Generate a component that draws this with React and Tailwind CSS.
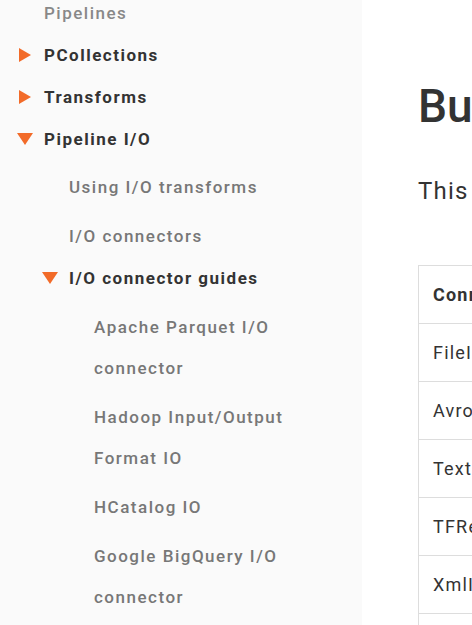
import React from 'react'

const ORANGE = '#f26b29'

// ── Triangles for expandable nav items ──────────────────────────────
const Caret = ({ open }) =>
  open ? (
    <svg width="16" height="12" viewBox="0 0 16 12" className="shrink-0">
      <polygon points="0,0 16,0 8,12" fill={ORANGE} />
    </svg>
  ) : (
    <svg width="12" height="14" viewBox="0 0 12 14" className="shrink-0">
      <polygon points="0,0 12,7 0,14" fill={ORANGE} />
    </svg>
  )

const Leaf = ({ children, indent }) => (
  <li className={`${indent} py-[4px] leading-[41px] text-[#777] font-medium`}>{children}</li>
)

const Branch = ({ label, open, indent, leading = 'leading-[42px]' }) => (
  <div className={`flex items-center ${indent} ${leading} font-bold text-[#333]`}>
    <span className={`flex ${open ? 'w-[27px]' : 'w-[25px]'}`}>
      <Caret open={open} />
    </span>
    {label}
  </div>
)

const Sidebar = () => (
  <aside className="w-[362px] shrink-0 bg-[#fafafa] h-[625px] overflow-hidden">
    <ul className="-mt-[8px] text-[17px] tracking-[1.5px]">
      <li className="pl-[44px] leading-[42px] font-medium text-[#888]">Pipelines</li>
      <li><Branch label="PCollections" indent="pl-[19px]" /></li>
      <li><Branch label="Transforms" indent="pl-[19px]" /></li>
      <li>
        <Branch label="Pipeline I/O" open indent="pl-[17px]" />
        <ul className="mt-[3px]">
          <Leaf indent="pl-[69px]">Using I/O transforms</Leaf>
          <Leaf indent="pl-[69px]">I/O connectors</Leaf>
          <li>
            <Branch label="I/O connector guides" open indent="pl-[42px]" leading="leading-[34px]" />
            <ul className="mt-[8px] pr-[60px]">
              <Leaf indent="pl-[94px]">Apache Parquet I/O connector</Leaf>
              <Leaf indent="pl-[94px]">Hadoop Input/Output Format IO</Leaf>
              <Leaf indent="pl-[94px]">HCatalog IO</Leaf>
              <Leaf indent="pl-[94px]">Google BigQuery I/O connector</Leaf>
              <Leaf indent="pl-[94px]">Google Cloud Spanner I/O connector</Leaf>
            </ul>
          </li>
        </ul>
      </li>
    </ul>
  </aside>
)

const ROWS = ['FileIO', 'AvroIO', 'TextIO', 'TFRecordIO', 'XmlIO', 'TikaIO', 'ParquetIO']

const Main = () => (
  <main className="w-[900px] shrink-0 bg-white pl-[56px] text-[#333]">
    <h1 className="mt-[79px] text-[46px] leading-[55px] font-medium whitespace-nowrap">
      Built-in I/O Transforms
    </h1>
    <p className="mt-[39px] text-[24px] leading-[36px] tracking-[1.2px] whitespace-nowrap">
      This table contains I/O transforms that are currently planned or in-progress.
    </p>
    <table className="mt-[56px] border-collapse text-[18px] tracking-[1.2px]">
      <thead>
        <tr className="h-[58px]">
          <th className="border border-[#ddd] px-[14px] text-left font-bold">Connector</th>
          <th className="border border-[#ddd] px-[14px] text-left font-bold">Description</th>
          <th className="border border-[#ddd] px-[14px] text-left font-bold">Java</th>
        </tr>
      </thead>
      <tbody>
        {ROWS.map((r) => (
          <tr key={r} className="h-[58px]">
            <td className="border border-[#ddd] px-[14px]">{r}</td>
            <td className="border border-[#ddd] px-[14px]">General-purpose transforms for working with files</td>
            <td className="border border-[#ddd] px-[14px]">✓</td>
          </tr>
        ))}
      </tbody>
    </table>
  </main>
)

export default function App() {
  return (
    <div className="flex w-[472px] h-[625px] overflow-hidden bg-white" style={{ fontFamily: 'Roboto, sans-serif' }}>
      <Sidebar />
      <Main />
    </div>
  )
}
